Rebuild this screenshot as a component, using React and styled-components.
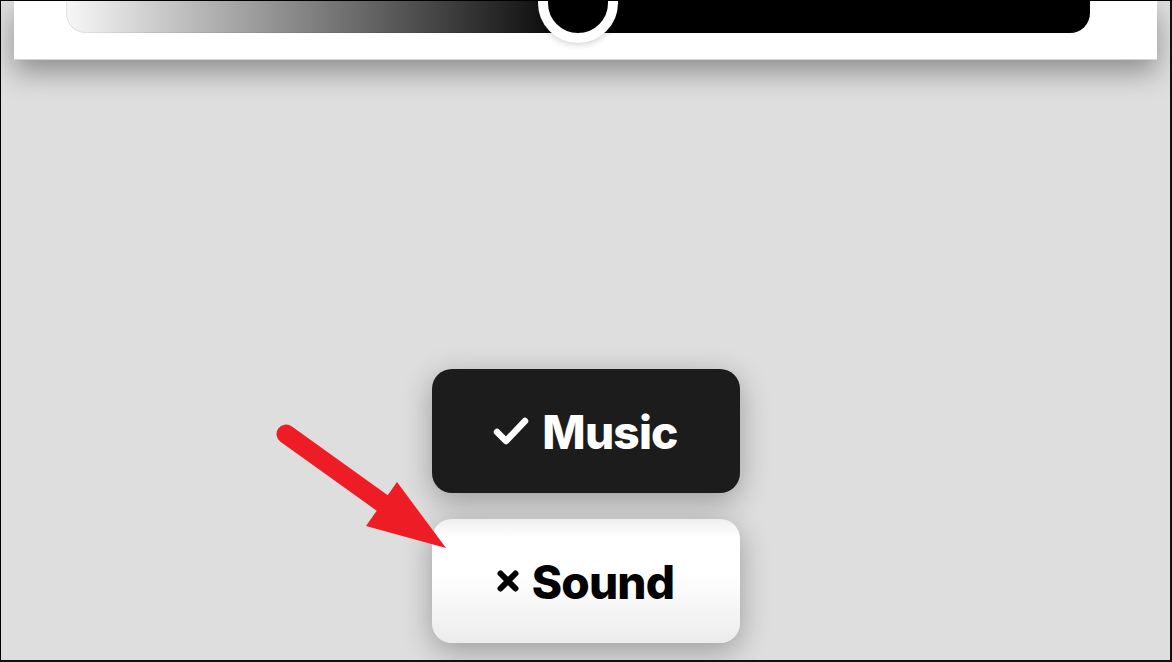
import React from "react";
import styled, { createGlobalStyle } from "styled-components";

const GlobalStyle = createGlobalStyle`
  html, body {
    margin: 0;
    padding: 0;
    overflow: hidden;
  }
  body {
    font-family: Inter, "Noto Sans", sans-serif;
  }
`;

const Frame = styled.div`
  position: relative;
  box-sizing: border-box;
  width: 1172px;
  height: 662px;
  background: #dedede;
  border-top: 1px solid #000;
  border-left: 1px solid #000;
  border-right: 2px solid #111;
  border-bottom: 2px solid #111;
  display: flex;
  flex-direction: column;
  align-items: stretch;
  overflow: hidden;
`;

const Card = styled.div`
  box-sizing: border-box;
  height: 59px;
  margin: 0 13px 0 13px;
  padding: 0 67px 0 52px;
  background: #fff;
  border-bottom: 1px solid #d6d6d6;
  box-shadow: 0 12px 28px rgba(0, 0, 0, 0.36);
`;

const Track = styled.div`
  position: relative;
  height: 32px;
  border-radius: 0 0 20px 20px;
  background: linear-gradient(to right, #f7f7f7 0%, #000 50%, #000 100%);
  box-shadow: inset 1px 0 0 rgba(0, 0, 0, 0.08), inset 0 -1px 0 rgba(0, 0, 0, 0.06);
`;

const Thumb = styled.div`
  position: absolute;
  left: 50%;
  top: -38px;
  transform: translateX(-50%);
  box-sizing: border-box;
  width: 80px;
  height: 80px;
  border-radius: 50%;
  background: #000;
  border: 10px solid #fff;
  box-shadow: 0 2px 6px rgba(0, 0, 0, 0.18);
`;

const Toggles = styled.div`
  margin-top: auto;
  padding-bottom: 17px;
  display: flex;
  flex-direction: column;
  align-items: center;
  gap: 26px;
`;

const Toggle = styled.div`
  box-sizing: border-box;
  width: 308px;
  height: 124px;
  border-radius: 20px;
  display: flex;
  align-items: center;
  justify-content: center;
  gap: 13px;
  font-family: Inter, "Noto Sans", sans-serif;
  font-weight: 800;
  font-size: 46px;
  letter-spacing: -0.8px;
  color: ${(p) => (p.$on ? "#fff" : "#000")};
  background: ${(p) =>
    p.$on
      ? "#1c1c1c"
      : "linear-gradient(#eeeeee 0%, #ffffff 14%, #ffffff 45%, #ececec 100%)"};
  box-shadow: 0 8px 30px rgba(0, 0, 0, 0.3);
`;

const Label = styled.span`
  line-height: 1;
  padding-top: 2px;
`;

const Annotation = styled.svg`
  position: absolute;
  left: -1px;
  top: -1px;
  width: 1172px;
  height: 662px;
  pointer-events: none;
`;

const CheckIcon = () => (
  <svg width="36" height="28" viewBox="0 0 36 28">
    <path
      d="M4 15 L13 24 L32 4"
      fill="none"
      stroke="#fff"
      strokeWidth="6.5"
      strokeLinecap="round"
      strokeLinejoin="round"
    />
  </svg>
);

const CrossIcon = () => (
  <svg width="22" height="22" viewBox="0 0 22 22">
    <path
      d="M3.5 3.5 L18.5 18.5 M18.5 3.5 L3.5 18.5"
      fill="none"
      stroke="#000"
      strokeWidth="6"
      strokeLinecap="round"
    />
  </svg>
);

export default function App() {
  return (
    <>
      <GlobalStyle />
      <Frame>
        <Card>
          <Track>
            <Thumb />
          </Track>
        </Card>
        <Toggles>
          <Toggle $on>
            <CheckIcon />
            <Label>Music</Label>
          </Toggle>
          <Toggle>
            <CrossIcon />
            <Label>Sound</Label>
          </Toggle>
        </Toggles>
        <Annotation viewBox="0 0 1172 662">
          <line
            x1="286"
            y1="434"
            x2="392"
            y2="510"
            stroke="#ee1c25"
            strokeWidth="19"
            strokeLinecap="round"
          />
          <polygon points="397,482 366,526 446,548" fill="#ee1c25" />
        </Annotation>
      </Frame>
    </>
  );
}
